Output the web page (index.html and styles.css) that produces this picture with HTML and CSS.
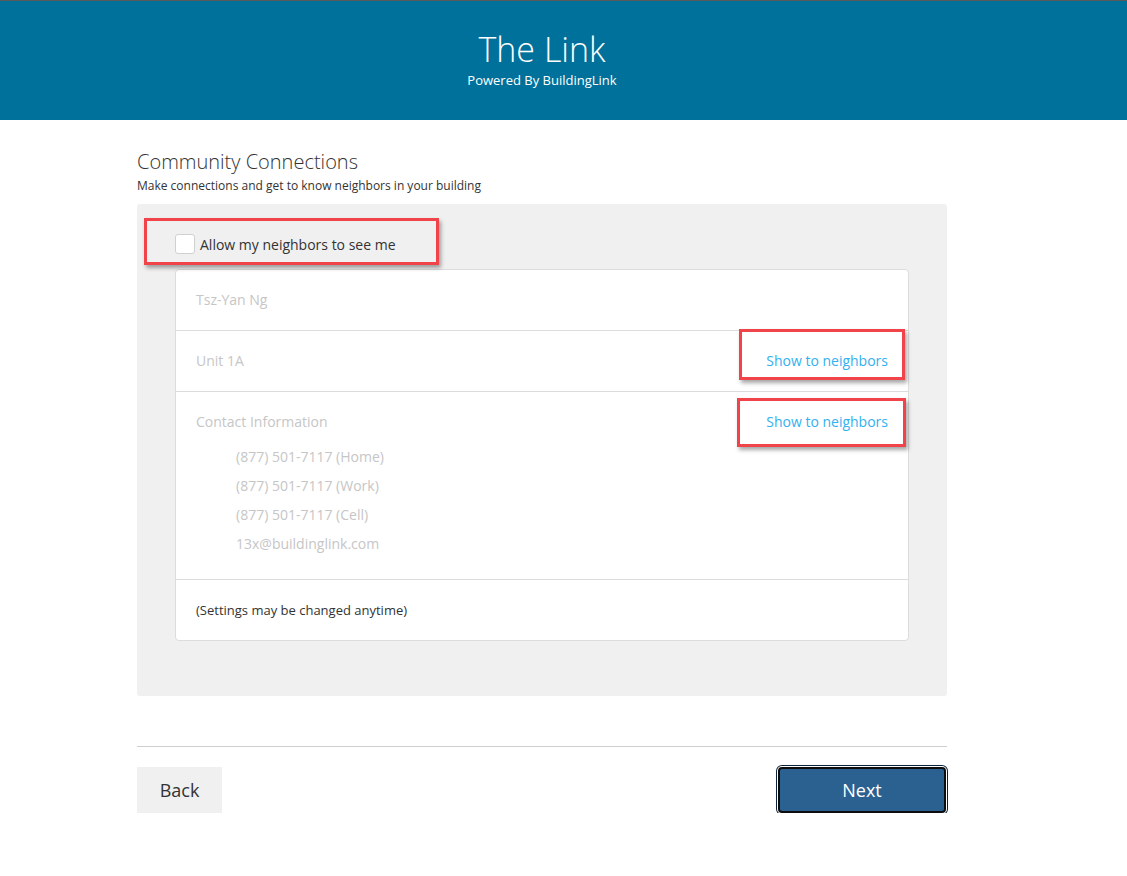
FILE: index.html
```html
<!DOCTYPE html>
<html>
<head>
<meta charset="utf-8">
<title>The Link</title>
<link rel="stylesheet" href="styles.css">
</head>
<body>
<header class="header">
  <div class="header-inner">
    <h1 class="brand">The Link</h1>
    <div class="powered">Powered By BuildingLink</div>
  </div>
</header>
<main class="page">
  <h2 class="title">Community Connections</h2>
  <p class="subtitle">Make connections and get to know neighbors in your building</p>
  <section class="panel">
    <label class="allow">
      <span class="checkbox"></span>
      <span>Allow my neighbors to see me</span>
      <span class="mark mark-allow"></span>
    </label>
    <div class="card">
      <div class="row"><span class="muted">Tsz-Yan Ng</span></div>
      <div class="row">
        <span class="muted">Unit 1A</span>
        <span class="show">Show to neighbors<span class="mark mark-unit"></span></span>
      </div>
      <div class="row contact">
        <div class="contact-head">
          <span class="muted">Contact Information</span>
          <span class="show">Show to neighbors<span class="mark mark-contact"></span></span>
        </div>
        <ul class="contact-list">
          <li>(877) 501-7117 (Home)</li>
          <li>(877) 501-7117 (Work)</li>
          <li>(877) 501-7117 (Cell)</li>
          <li>13x@buildinglink.com</li>
        </ul>
      </div>
      <div class="row note">(Settings may be changed anytime)</div>
    </div>
  </section>
  <hr class="rule">
  <div class="actions">
    <button class="btn btn-back">Back</button>
    <button class="btn btn-next">Next</button>
  </div>
</main>
</body>
</html>
```

FILE: styles.css
```css
* { box-sizing: border-box; }
html, body { margin: 0; padding: 0; }
body {
  font-family: "Open Sans", "Noto Sans", sans-serif;
  color: #333;
  background: #fff;
}
.header {
  height: 120px;
  background: #00719b;
  border-top: 1px solid #5a5a5a;
  color: #fff;
  padding-top: 28px;
}
.header-inner {
  width: 810px;
  margin-left: 137px;
  text-align: center;
}
.brand {
  margin: 0;
  font-weight: 300;
  font-size: 34px;
  line-height: 40px;
}
.powered {
  font-size: 13px;
  line-height: 18px;
  margin-top: 2px;
}
.page {
  width: 810px;
  margin-left: 137px;
  padding-top: 29px;
}
.title {
  margin: 0;
  font-weight: 300;
  font-size: 20px;
  line-height: 26px;
  color: #333;
}
.subtitle {
  margin: 3px 0 0;
  font-size: 12px;
  line-height: 16px;
  color: #333;
}
.panel {
  margin-top: 10px;
  background: #f0f0f0;
  border-radius: 3px;
  padding: 30px 38px 55px;
}
.allow {
  position: relative;
  display: flex;
  align-items: center;
  gap: 5px;
  height: 20px;
  font-size: 14px;
  color: #333;
  margin-bottom: 15px;
}
.checkbox {
  width: 20px;
  height: 20px;
  background: #fff;
  border: 1px solid #d0d0d0;
  border-radius: 3px;
}
.mark {
  position: absolute;
  border: 3px solid #f0444a;
  box-shadow: 2px 3px 4px rgba(0,0,0,0.35);
  pointer-events: none;
}
.mark-allow { left: -31px; top: -16px; width: 295px; height: 47px; }
.card {
  background: #fff;
  border: 1px solid #dcdcdc;
  border-radius: 4px;
}
.row {
  display: flex;
  justify-content: space-between;
  align-items: center;
  padding: 20px 20px;
  line-height: 20px;
  font-size: 14px;
  border-bottom: 1px solid #dcdcdc;
}
.row:last-child { border-bottom: none; }
.muted { color: #c6c6c6; }
.show {
  position: relative;
  color: #32b1ef;
  font-size: 14px;
}
.mark-unit { left: -27px; top: -22px; width: 166px; height: 51px; }
.mark-contact { left: -29px; top: -14px; width: 169px; height: 49px; }
.contact { display: block; }
.contact-head {
  display: flex;
  justify-content: space-between;
  align-items: center;
}
.contact-list {
  list-style: none;
  margin: 10px 0 0;
  padding: 0 0 1px 40px;
  color: #c6c6c6;
  line-height: 29px;
}
.note {
  font-size: 13px;
  color: #333;
}
.rule {
  margin: 50px 0 0;
  border: none;
  border-top: 1px solid #cfcfcf;
  height: 0;
}
.actions {
  display: flex;
  justify-content: space-between;
  margin-top: 20px;
}
.btn {
  font-family: "Open Sans", "Noto Sans", sans-serif;
  font-size: 18px;
  height: 46px;
  cursor: pointer;
}
.btn-back {
  width: 85px;
  border: none;
  background: #f0f0f0;
  color: #333;
}
.btn-next {
  width: 168px;
  margin-right: 1px;
  color: #fff;
  background: #2b6190;
  border: 2px solid #0d0d0d;
  border-radius: 4px;
  box-shadow: 0 0 0 1px #fff, 0 0 0 2px #0d2238;
}
```
